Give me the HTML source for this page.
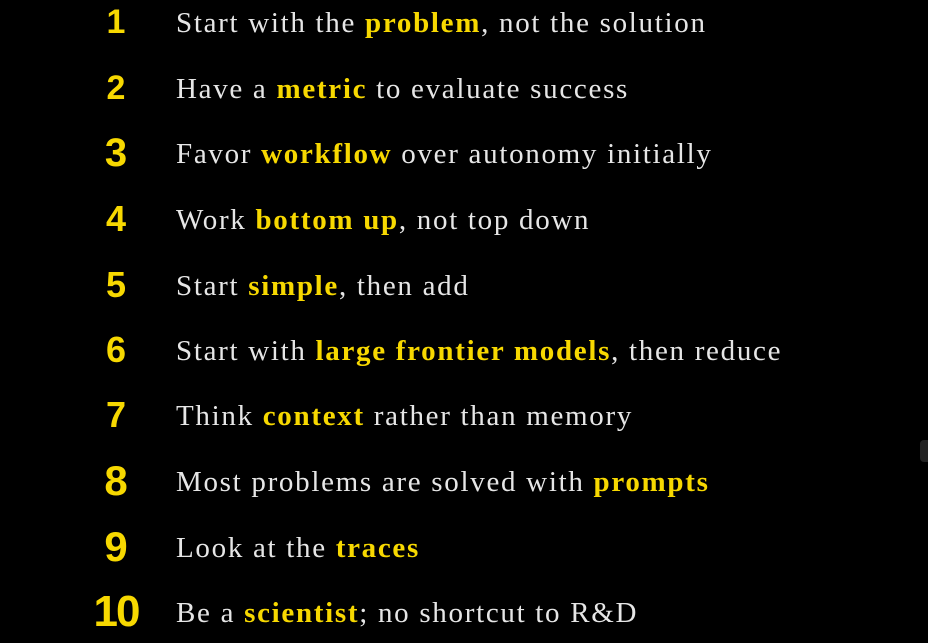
<!DOCTYPE html>
<html><head><meta charset="utf-8"><style>
html,body{margin:0;padding:0;background:#000;width:928px;height:643px;overflow:hidden}
.row{position:absolute;left:0;width:928px;height:40px}
.n{position:absolute;width:60px;left:86px;text-align:center;font-family:"Liberation Sans",sans-serif;font-weight:bold;color:#f7d800;line-height:40px;top:0}
.t{position:absolute;left:176px;top:1px;line-height:40px;font-family:"Liberation Serif",serif;font-size:29px;color:#e6e6e6;white-space:nowrap;letter-spacing:1.7px}
.t b{color:#f7d800;font-weight:bold}
</style></head><body>
<div class="row" style="top:2px"><div class="n" style="font-size:34px">1</div><div class="t">Start with the <b>problem</b>, not the solution</div></div>
<div class="row" style="top:68px"><div class="n" style="font-size:34px">2</div><div class="t">Have a <b>metric</b> to evaluate success</div></div>
<div class="row" style="top:133px"><div class="n" style="font-size:40px">3</div><div class="t">Favor <b>workflow</b> over autonomy initially</div></div>
<div class="row" style="top:199px"><div class="n" style="font-size:36px">4</div><div class="t">Work <b>bottom up</b>, not top down</div></div>
<div class="row" style="top:265px"><div class="n" style="font-size:36px">5</div><div class="t">Start <b>simple</b>, then add</div></div>
<div class="row" style="top:330px"><div class="n" style="font-size:36px">6</div><div class="t">Start with <b>large frontier models</b>, then reduce</div></div>
<div class="row" style="top:395px"><div class="n" style="font-size:36px">7</div><div class="t">Think <b>context</b> rather than memory</div></div>
<div class="row" style="top:461px"><div class="n" style="font-size:42px">8</div><div class="t">Most problems are solved with <b>prompts</b></div></div>
<div class="row" style="top:527px"><div class="n" style="font-size:42px">9</div><div class="t">Look at the <b>traces</b></div></div>
<div class="row" style="top:592px"><div class="n" style="font-size:44px;letter-spacing:-2px">10</div><div class="t">Be a <b>scientist</b>; no shortcut to R&amp;D</div></div>
<div style="position:absolute;left:920px;top:440px;width:8px;height:22px;background:#222;border-radius:4px 0 0 4px"></div>
</body></html>
